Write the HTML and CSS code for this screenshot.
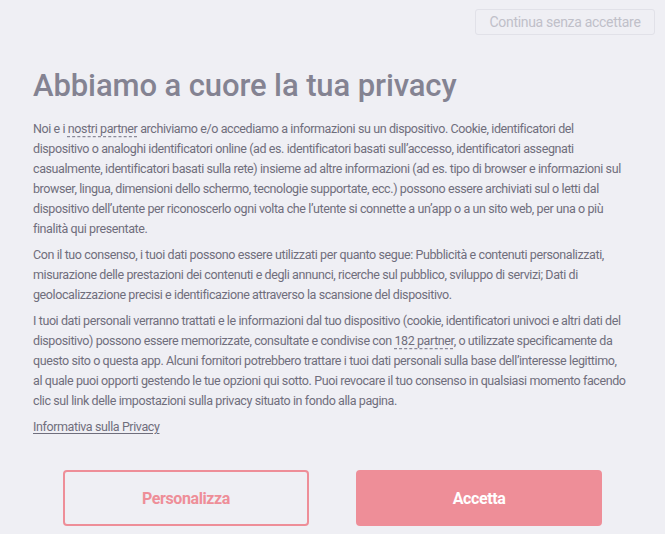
FILE: index.html
```html
<!DOCTYPE html>
<html lang="it">
<head>
<meta charset="utf-8">
<title>Privacy</title>
<link rel="stylesheet" href="styles.css">
</head>
<body>
<div class="page">
  <div class="topbar">
    <button class="skip">Continua senza accettare</button>
  </div>
  <div class="content">
    <h1 class="title">Abbiamo a cuore la tua privacy</h1>
    <p class="para">Noi e i <a class="dotted">nostri partner</a> archiviamo e/o accediamo a informazioni su un dispositivo. Cookie, identificatori del dispositivo o analoghi identificatori online (ad es. identificatori basati sull’accesso, identificatori assegnati casualmente, identificatori basati sulla rete) insieme ad altre informazioni (ad es. tipo di browser e informazioni sul browser, lingua, dimensioni dello schermo, tecnologie supportate, ecc.) possono essere archiviati sul o letti dal dispositivo dell’utente per riconoscerlo ogni volta che l’utente si connette a un’app o a un sito web, per una o più finalità qui presentate.</p>
    <p class="para">Con il tuo consenso, i tuoi dati possono essere utilizzati per quanto segue: Pubblicità e contenuti personalizzati, misurazione delle prestazioni dei contenuti e degli annunci, ricerche sul pubblico, sviluppo di servizi; Dati di geolocalizzazione precisi e identificazione attraverso la scansione del dispositivo.</p>
    <p class="para">I tuoi dati personali verranno trattati e le informazioni dal tuo dispositivo (cookie, identificatori univoci e altri dati del dispositivo) possono essere memorizzate, consultate e condivise con <a class="dotted">182 partner</a>, o utilizzate specificamente da questo sito o questa app. Alcuni fornitori potrebbero trattare i tuoi dati personali sulla base dell’interesse legittimo, al quale puoi opporti gestendo le tue opzioni qui sotto. Puoi revocare il tuo consenso in qualsiasi momento facendo clic sul link delle impostazioni sulla privacy situato in fondo alla pagina.</p>
    <p class="para"><a class="solid">Informativa sulla Privacy</a></p>
  </div>
  <div class="actions">
    <button class="btn btn-outline">Personalizza</button>
    <button class="btn btn-fill">Accetta</button>
  </div>
</div>
</body>
</html>
```
FILE: styles.css
```css
html, body {
  margin: 0;
  padding: 0;
  background: #efeff4;
}
body {
  font-family: Roboto, "Liberation Sans", sans-serif;
  color: #6f6e7c;
}
.page {
  display: flex;
  flex-direction: column;
}
.topbar {
  display: flex;
  justify-content: flex-end;
  padding: 9px 10px 0 0;
}
.skip {
  width: 180px;
  height: 26px;
  box-sizing: border-box;
  border: 1px solid #e1e1e8;
  border-radius: 3px;
  background: transparent;
  font-family: Roboto, sans-serif;
  font-size: 14px;
  letter-spacing: -0.3px;
  color: #c0c0c9;
  padding: 0;
}
.content {
  padding: 0 37px 0 33px;
}
.title {
  margin: 32px 0 14px;
  font-size: 31px;
  line-height: 38px;
  font-weight: 500;
  letter-spacing: -0.1px;
  color: #848392;
}
.para {
  margin: 0 0 6px;
  font-size: 12.5px;
  line-height: 20px;
  letter-spacing: -0.4px;
}
.dotted {
  color: inherit;
  text-decoration: underline dashed #8a8998;
  text-underline-offset: 3px;
}
.solid {
  color: inherit;
  text-decoration: underline;
  text-underline-offset: 2px;
}
.actions {
  display: flex;
  justify-content: center;
  gap: 47px;
  margin-top: 27px;
}
.btn {
  width: 246px;
  height: 56px;
  box-sizing: border-box;
  border-radius: 4px;
  font-family: Roboto, sans-serif;
  font-size: 16px;
  font-weight: 700;
  letter-spacing: -0.4px;
  padding: 0;
}
.btn-outline {
  background: transparent;
  border: 2px solid #ee8e98;
  color: #ee8e98;
}
.btn-fill {
  background: #ee8e98;
  border: 2px solid #ee8e98;
  color: #ffffff;
}
```
